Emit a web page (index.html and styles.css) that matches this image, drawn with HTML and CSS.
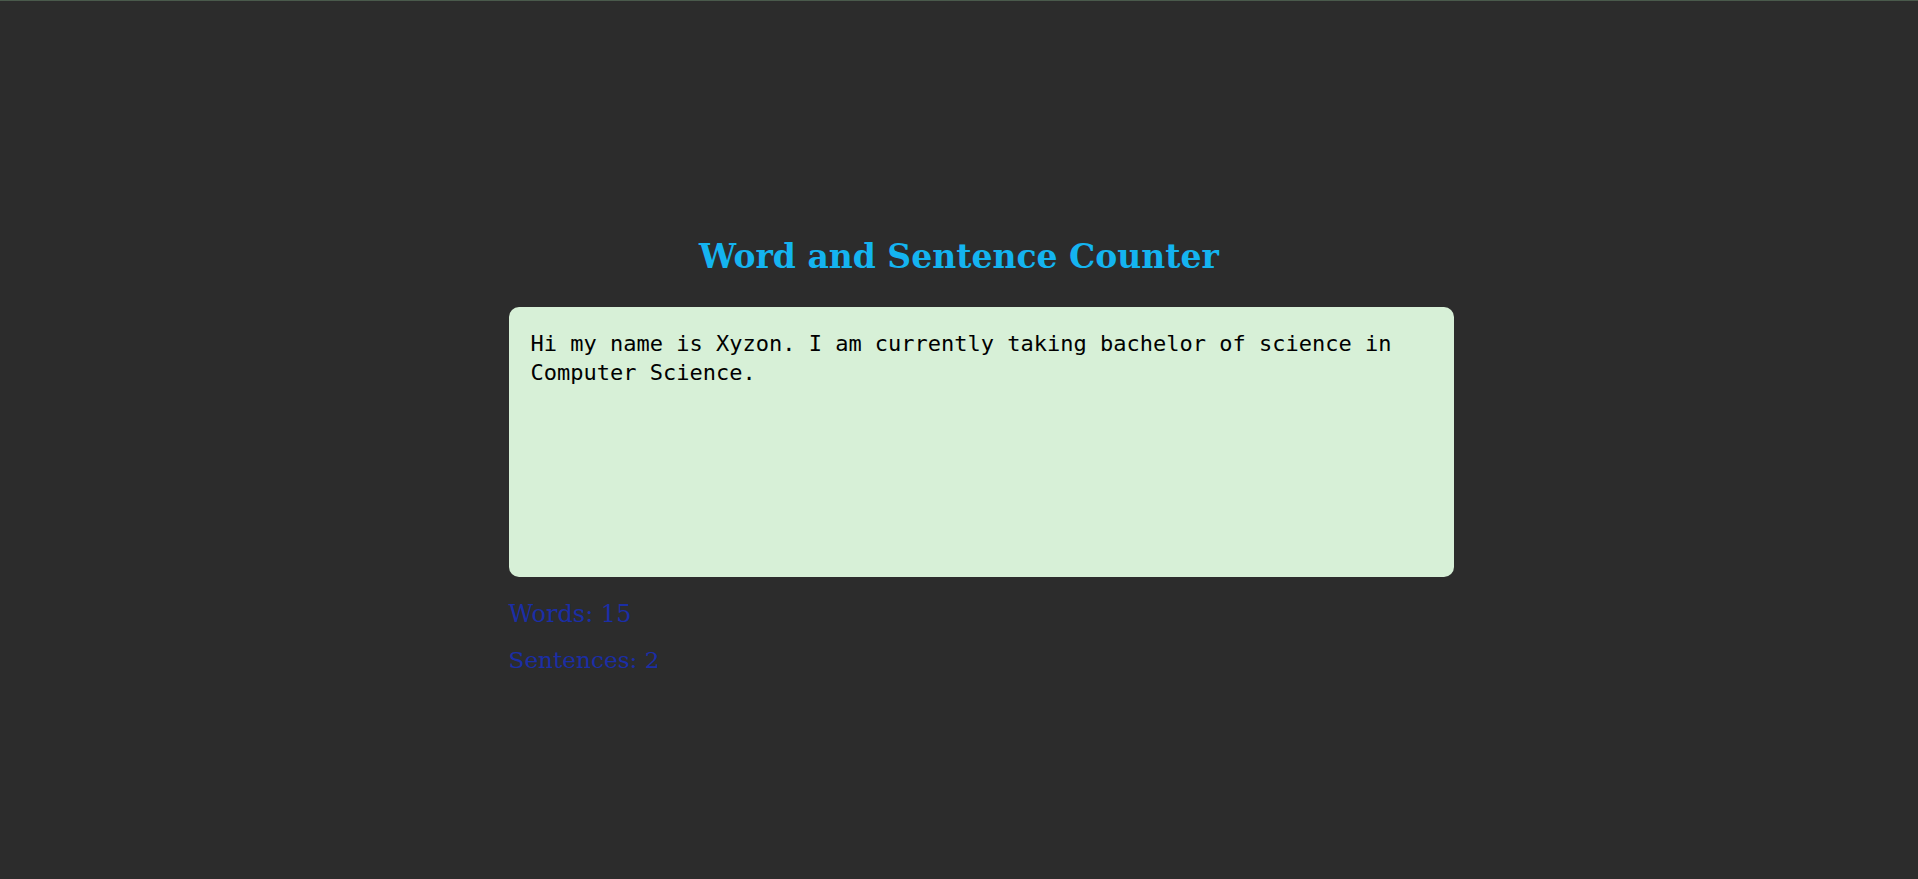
FILE: index.html
```html
<!DOCTYPE html>
<html lang="en">
<head>
<meta charset="utf-8">
<title>Word and Sentence Counter</title>
<link rel="stylesheet" href="styles.css">
</head>
<body>
<main class="app">
  <h1 class="title">Word and Sentence Counter</h1>
  <textarea class="editor" id="editor" spellcheck="false">Hi my name is Xyzon. I am currently taking bachelor of science in Computer Science. </textarea>
  <p class="stat">Words: 15</p>
  <p class="stat">Sentences: 2</p>
</main>
<script src="app.js"></script>
</body>
</html>
```

FILE: styles.css
```css
html {
  background: #2c2c2c;
}
body {
  margin: 0;
  min-height: 879px;
  box-sizing: border-box;
  border-top: 1px solid #4a5a4c;
  background: #2c2c2c;
  font-family: "DejaVu Serif", Georgia, serif;
}
.app {
  width: 901px;
  margin: 0 auto;
  padding-top: 236px;
}
.title {
  margin: 0 0 30px;
  text-align: center;
  color: #14b4f0;
  font-size: 33px;
  font-weight: bold;
  line-height: 40px;
}
.editor {
  display: block;
  width: 100%;
  height: 228px;
  padding: 22px 22px 20px;
  margin: 0;
  border: none;
  border-radius: 10px;
  background: #d7f0d7;
  color: #000;
  caret-color: #000;
  font-family: "DejaVu Sans Mono", monospace;
  font-size: 22px;
  line-height: 29px;
  resize: none;
  outline: none;
}
.stat {
  margin: 0;
  color: #1b2ea6;
  font-size: 24px;
  line-height: 45px;
}
.stat:last-child {
  font-size: 23.2px;
}
.editor + .stat {
  margin-top: 15px;
}
```

FILE: app.js
```js
const editor = document.getElementById('editor');
editor.focus();
editor.setSelectionRange(editor.value.length, editor.value.length);
```
